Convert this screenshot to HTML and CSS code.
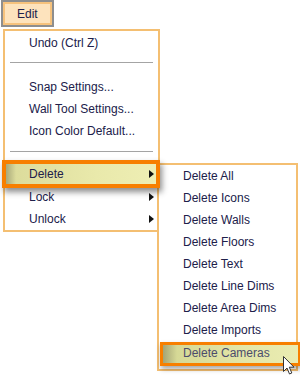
FILE: index.html
```html
<!DOCTYPE html>
<html lang="en">
<head>
  <meta charset="UTF-8" />
  <meta name="viewport" content="width=device-width, initial-scale=1" />
  <title>Edit menu</title>
  <link rel="stylesheet" href="styles.css">
</head>
<body>
  <div class="menubar">
    <div class="edit-btn">Edit</div>
  </div>

  <div class="menu">
    <div class="item">Undo (Ctrl Z)</div>
    <div class="sep sep-top"></div>
    <div class="item">Snap Settings...</div>
    <div class="item">Wall Tool Settings...</div>
    <div class="item">Icon Color Default...</div>
    <div class="sep sep-bottom"></div>
    <div class="item sub active">Delete</div>
    <div class="item sub">Lock</div>
    <div class="item sub">Unlock</div>
  </div>

  <div class="submenu">
    <div class="item">Delete All</div>
    <div class="item">Delete Icons</div>
    <div class="item">Delete Walls</div>
    <div class="item">Delete Floors</div>
    <div class="item">Delete Text</div>
    <div class="item">Delete Line Dims</div>
    <div class="item">Delete Area Dims</div>
    <div class="item">Delete Imports</div>
    <div class="item active">Delete Cameras</div>
  </div>

  <svg class="cursor" width="14" height="22" viewBox="0 0 14 22">
    <path d="M1.5 1.5 L1.5 16.5 L5 13 L7.5 19 L9.8 18 L7.3 12.2 L12 12.2 Z" fill="#ffffff" stroke="#333" stroke-width="1" stroke-linejoin="round"/>
  </svg>
</body>
</html>
```

FILE: styles.css
```css
* {
  margin: 0;
  padding: 0;
  box-sizing: border-box;
}

body {
  font-family: 'Liberation Sans', Arial, sans-serif;
  font-size: 12px;
  color: #20204a;
  background: #ffffff;
  width: 300px;
  height: 378px;
  position: relative;
  overflow: hidden;
}

.menubar {
  padding-left: 1px;
}

.edit-btn {
  width: 53px;
  height: 27px;
  border: 2px solid #8e8e8e;
  background: #fde3bd;
  box-shadow: inset 0 0 0 2px #f6c27c;
  padding: 3px 0 0 14px;
  line-height: 18px;
}

.menu {
  width: 157px;
  margin: 2px 0 0 3px;
  border: 2px solid #f4bf72;
  background: #ffffff;
  padding: 1px 0 0;
}

.item {
  position: relative;
  height: 22px;
  line-height: 22px;
  padding-left: 24px;
  white-space: nowrap;
}

.sep {
  height: 2px;
  margin: 0 5px;
  border-top: 1px solid #a4a4a4;
  border-bottom: 1px solid #ffffff;
}

.sep-top {
  margin-top: 8px;
  margin-bottom: 12px;
}

.sep-bottom {
  margin-top: 9px;
  margin-bottom: 7px;
}

.sub::after {
  content: '';
  position: absolute;
  right: 4px;
  top: 7px;
  border-top: 4px solid transparent;
  border-bottom: 4px solid transparent;
  border-left: 5px solid #111111;
}

.menu .active {
  height: 28px;
  line-height: 20px;
  margin: 0 -2px -2px -3px;
  padding-left: 23px;
  border: 4px solid #f77f00;
  background: linear-gradient(to right, #a9a97a 0, #dcdc9c 10px, #e9e9ab 60%, #eeeeb4 100%);
  box-shadow: 2px 4px 6px rgba(0, 0, 0, 0.45);
  z-index: 1;
}

.menu .active::after {
  right: 2px;
  top: 6px;
}

.submenu {
  position: absolute;
  left: 157px;
  top: 163px;
  width: 141px;
  border: 2px solid #f4bf72;
  background: #ffffff;
  padding: 0 0 6px;
}

.submenu .active {
  height: 24px;
  line-height: 16px;
  margin: 1px -5px -3px 1px;
  padding: 0 0 2px 20px;
  border: 3px solid #f77f00;
  color: #4c4c6c;
  background: linear-gradient(to right, #a4a476 0, #d6d996 14px, #e3e6a8 60%, #eaecb2 100%);
  box-shadow: 1px 3px 5px rgba(0, 0, 0, 0.35);
}

.cursor {
  position: absolute;
  left: 282px;
  top: 355px;
}
```
